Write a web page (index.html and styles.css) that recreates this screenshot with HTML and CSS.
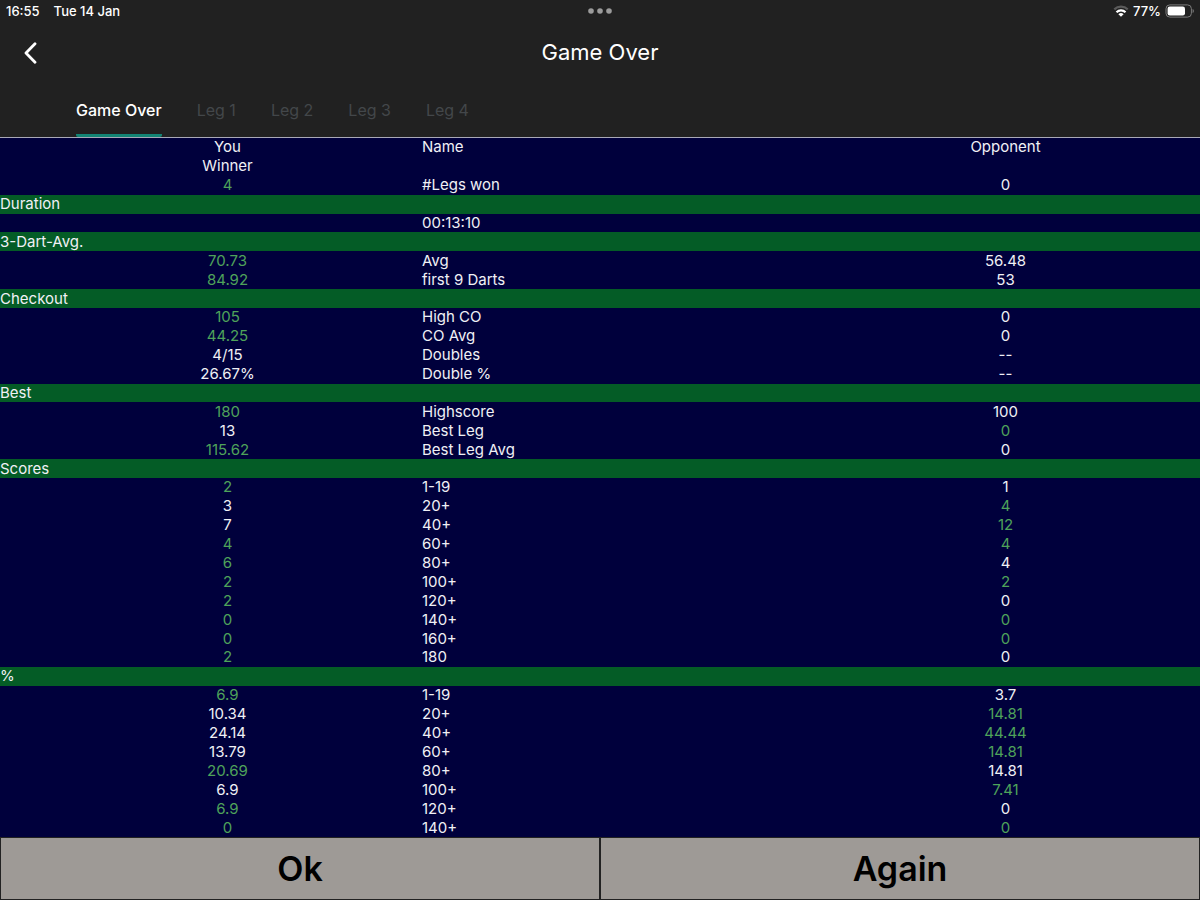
FILE: index.html
```html
<!DOCTYPE html>
<html lang="en">
<head>
    <meta charset="UTF-8">
    <meta name="viewport" content="width=device-width, initial-scale=1.0">
    <title>Game Over</title>
    <link rel="stylesheet" href="styles.css">
</head>
<body>
    <header class="header">
        <div class="status-bar">
            <div class="status-left">
                <span>16:55</span>
                <span>Tue 14 Jan</span>
            </div>
            <svg class="dots" width="24" height="6" viewBox="0 0 24 6" fill="#9b9b9b">
                <circle cx="3" cy="3" r="2.8"></circle>
                <circle cx="12" cy="3" r="2.8"></circle>
                <circle cx="21" cy="3" r="2.8"></circle>
            </svg>
            <div class="status-right">
                <svg width="16" height="12" viewBox="0 0 16 12" fill="none" stroke-width="2.2">
                    <path d="M1.3 4.4a9.6 9.6 0 0 1 13.4 0" stroke="#5a5a5a"></path>
                    <path d="M3.5 7.2a6.4 6.4 0 0 1 9 0" stroke="#fff"></path>
                    <path d="M8 11.8L5.4 9.2a3.7 3.7 0 0 1 5.2 0z" fill="#fff"></path>
                </svg>
                <span>77%</span>
                <svg width="29" height="14" viewBox="0 0 29 14">
                    <rect x="1" y="0.9" width="25.4" height="12.2" rx="3.8" fill="none" stroke="#7c7c7c"></rect>
                    <rect x="2.6" y="2.5" width="17.4" height="9" rx="2.2" fill="#fff"></rect>
                    <path d="M27.6 5v4c1.6-.6 1.6-3.4 0-4z" fill="#7c7c7c"></path>
                </svg>
            </div>
        </div>
        <div class="title-bar">
            <button class="back-btn" type="button" aria-label="Back">
                <svg width="14" height="22" viewBox="0 0 14 22" fill="none" stroke="#fff" stroke-width="2.8" stroke-linecap="round" stroke-linejoin="round">
                    <polyline points="12 1.8 3 11 12 20.2"></polyline>
                </svg>
            </button>
            <h1>Game Over</h1>
        </div>
        <nav class="tabs">
            <a class="tab active" href="#game">Game Over</a>
            <a class="tab" href="#leg1">Leg 1</a>
            <a class="tab" href="#leg2">Leg 2</a>
            <a class="tab" href="#leg3">Leg 3</a>
            <a class="tab" href="#leg4">Leg 4</a>
        </nav>
    </header>

    <main class="content">
        <table class="stats">
            <colgroup>
                <col class="indent">
                <col>
                <col>
                <col>
            </colgroup>
            <tbody>
                <tr><td class="you" colspan="2">You</td><td class="name">Name</td><td>Opponent</td></tr>
                <tr><td class="you" colspan="2">Winner</td><td class="name"></td><td></td></tr>
                <tr><td class="you best" colspan="2">4</td><td class="name">#Legs won</td><td>0</td></tr>

                <tr class="section"><th colspan="4">Duration</th></tr>
                <tr><td class="you" colspan="2"></td><td class="name">00:13:10</td><td></td></tr>

                <tr class="section"><th colspan="4">3-Dart-Avg.</th></tr>
                <tr><td class="you best" colspan="2">70.73</td><td class="name">Avg</td><td>56.48</td></tr>
                <tr><td class="you best" colspan="2">84.92</td><td class="name">first 9 Darts</td><td>53</td></tr>

                <tr class="section"><th colspan="4">Checkout</th></tr>
                <tr><td class="you best" colspan="2">105</td><td class="name">High CO</td><td>0</td></tr>
                <tr><td class="you best" colspan="2">44.25</td><td class="name">CO Avg</td><td>0</td></tr>
                <tr><td class="you" colspan="2">4/15</td><td class="name">Doubles</td><td>--</td></tr>
                <tr><td class="you" colspan="2">26.67%</td><td class="name">Double %</td><td>--</td></tr>

                <tr class="section"><th colspan="4">Best</th></tr>
                <tr><td class="you best" colspan="2">180</td><td class="name">Highscore</td><td>100</td></tr>
                <tr><td class="you" colspan="2">13</td><td class="name">Best Leg</td><td class="best">0</td></tr>
                <tr><td class="you best" colspan="2">115.62</td><td class="name">Best Leg Avg</td><td>0</td></tr>

                <tr class="section"><th colspan="4">Scores</th></tr>
                <tr><td class="you best" colspan="2">2</td><td class="name">1-19</td><td>1</td></tr>
                <tr><td class="you" colspan="2">3</td><td class="name">20+</td><td class="best">4</td></tr>
                <tr><td class="you" colspan="2">7</td><td class="name">40+</td><td class="best">12</td></tr>
                <tr><td class="you best" colspan="2">4</td><td class="name">60+</td><td class="best">4</td></tr>
                <tr><td class="you best" colspan="2">6</td><td class="name">80+</td><td>4</td></tr>
                <tr><td class="you best" colspan="2">2</td><td class="name">100+</td><td class="best">2</td></tr>
                <tr><td class="you best" colspan="2">2</td><td class="name">120+</td><td>0</td></tr>
                <tr><td class="you best" colspan="2">0</td><td class="name">140+</td><td class="best">0</td></tr>
                <tr><td class="you best" colspan="2">0</td><td class="name">160+</td><td class="best">0</td></tr>
                <tr><td class="you best" colspan="2">2</td><td class="name">180</td><td>0</td></tr>

                <tr class="section"><th colspan="4">%</th></tr>
                <tr><td class="you best" colspan="2">6.9</td><td class="name">1-19</td><td>3.7</td></tr>
                <tr><td class="you" colspan="2">10.34</td><td class="name">20+</td><td class="best">14.81</td></tr>
                <tr><td class="you" colspan="2">24.14</td><td class="name">40+</td><td class="best">44.44</td></tr>
                <tr><td class="you" colspan="2">13.79</td><td class="name">60+</td><td class="best">14.81</td></tr>
                <tr><td class="you best" colspan="2">20.69</td><td class="name">80+</td><td>14.81</td></tr>
                <tr><td class="you" colspan="2">6.9</td><td class="name">100+</td><td class="best">7.41</td></tr>
                <tr><td class="you best" colspan="2">6.9</td><td class="name">120+</td><td>0</td></tr>
                <tr><td class="you best" colspan="2">0</td><td class="name">140+</td><td class="best">0</td></tr>
            </tbody>
        </table>
    </main>

    <footer class="actions">
        <button type="button">Ok</button>
        <button type="button">Again</button>
    </footer>
</body>
</html>
```

FILE: styles.css
```css
* {
  box-sizing: border-box;
}

body {
  margin: 0;
  height: 100vh;
  display: flex;
  flex-direction: column;
  background-color: #00003c;
  color: #f0f0f5;
  font-family: Inter, "Liberation Sans", sans-serif;
  font-size: 15px;
}

/* Header */
.header {
  flex: none;
  background-color: #212121;
  border-bottom: 1px solid #a9a9b8;
  color: white;
}

.status-bar {
  display: grid;
  grid-template-columns: 1fr auto 1fr;
  align-items: center;
  height: 22px;
  padding: 0 6px;
  font-size: 13px;
  font-weight: 500;
}

.status-left {
  display: flex;
  gap: 14px;
}

.status-right {
  display: flex;
  justify-content: flex-end;
  align-items: center;
  gap: 4px;
}

.title-bar {
  display: grid;
  grid-template-columns: 48px 1fr 48px;
  align-items: center;
  height: 60px;
}

.title-bar h1 {
  margin: 0;
  font-size: 22px;
  font-weight: 400;
  line-height: 28px;
  text-align: center;
}

.back-btn {
  display: flex;
  justify-content: center;
  padding: 2px 0 0 12px;
  background: none;
  border: none;
  cursor: pointer;
}

.tabs {
  display: flex;
  gap: 35px;
  padding-left: 76px;
}

.tab {
  height: 55px;
  padding-top: 18px;
  border-bottom: 3px solid transparent;
  border-radius: 2px;
  color: #43474a;
  font-size: 16px;
  line-height: 20px;
  text-decoration: none;
}

.tab.active {
  border-bottom-color: #138575;
  color: white;
  font-weight: 500;
}

/* Statistics */
.content {
  flex: 1;
  min-height: 0;
  overflow: auto;
}

.stats {
  width: 100%;
  height: 100%;
  table-layout: fixed;
  border-collapse: collapse;
  line-height: 18px;
}

.stats .indent {
  width: 33px;
}

.stats td,
.stats th {
  padding: 0;
  text-align: center;
}

.stats .you {
  padding-left: 33px;
}

.stats .name {
  text-align: left;
}

.stats .best {
  color: #4fa35a;
}

.section {
  background-color: #045c26;
}

.stats .section th {
  font-weight: 400;
  text-align: left;
}

/* Bottom buttons */
.actions {
  flex: none;
  display: flex;
}

.actions button {
  flex: 1;
  height: 63px;
  background-color: #9e9a96;
  border: 1px solid #222;
  color: black;
  font-family: inherit;
  font-size: 34px;
  font-weight: 600;
  cursor: pointer;
}
```
